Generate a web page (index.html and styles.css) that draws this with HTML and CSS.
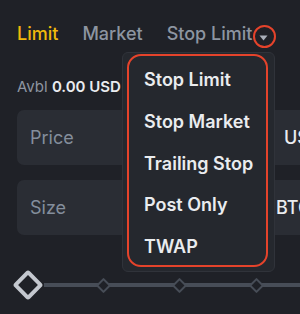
FILE: index.html
```html
<!DOCTYPE html>
<html>
<head>
<meta charset="utf-8">
<link rel="stylesheet" href="styles.css">
</head>
<body>
<div class="panel">
  <div class="tabs">
    <span class="tab active">Limit</span>
    <span class="tab">Market</span>
    <span class="tab">Stop Limit</span>
    <span class="caret-ring"><svg class="caret" width="9" height="6" viewBox="0 0 9 6"><path d="M0.5 0.5 H8.5 L4.5 5.5 Z" fill="#aab0ba"/></svg></span>
  </div>
  <div class="avbl"><span class="avbl-label">Avbl</span> <span class="avbl-value">0.00 USD</span></div>
  <div class="field"><span class="field-label">Price</span><span class="field-unit">USD</span></div>
  <div class="field field-size"><span class="field-label">Size</span><span class="field-unit">BTC</span></div>
  <div class="slider">
    <span class="knob"></span>
    <span class="track"></span>
    <span class="tick t1"></span>
    <span class="tick t2"></span>
    <span class="tick t3"></span>
  </div>
  <div class="menu">
    <ul class="menu-box">
      <li>Stop Limit</li>
      <li>Stop Market</li>
      <li>Trailing Stop</li>
      <li>Post Only</li>
      <li>TWAP</li>
    </ul>
  </div>
</div>
</body>
</html>
```
FILE: styles.css
```css
html, body {
  margin: 0;
  padding: 0;
  background: #1f2127;
  width: 300px;
  height: 314px;
  overflow: hidden;
  font-family: Inter, "Noto Sans", sans-serif;
}
.panel {
  position: relative;
  width: 300px;
  height: 314px;
  padding-left: 17px;
  box-sizing: border-box;
  overflow: hidden;
}
.tabs {
  display: flex;
  align-items: center;
  height: 34px;
  padding-top: 17px;
  font-size: 18px;
  font-weight: 500;
  color: #8d95a1;
}
.tab { margin-right: 24px; line-height: 34px; }
.tab:nth-child(3) { margin-right: 1px; }
.tab.active { color: #f0b90b; }
.caret-ring {
  width: 19px;
  height: 19px;
  border: 2px solid #e5432b;
  border-radius: 50%;
  display: flex;
  align-items: center;
  justify-content: center;
  margin-top: 4px;
}
.caret { margin-top: 3px; margin-left: -2px; }
.avbl {
  margin-top: 26px;
  height: 20px;
  line-height: 20px;
  font-size: 15px;
}
.avbl-label { color: #8d95a1; }
.avbl-value { color: #eaecef; font-weight: 600; }
.field {
  margin-top: 13px;
  height: 55px;
  width: 330px;
  border-radius: 7px;
  background: #2a2d34;
  display: flex;
  align-items: center;
  font-size: 18px;
  padding-left: 13px;
  box-sizing: border-box;
}
.field-size { margin-top: 15px; }
.field-label { color: #848e9c; width: 254px; }
.field-size .field-label { width: 246px; }
.field-unit { color: #eaecef; font-weight: 500; }
.slider {
  position: relative;
  height: 28px;
  margin-top: 36px;
  display: flex;
  align-items: center;
}
.track {
  flex: 1;
  height: 4px;
  background: #474d57;
  margin-left: 5px;
}
.knob {
  width: 14px;
  height: 14px;
  border: 4px solid #c4c8cf;
  border-radius: 3px;
  background: #1f2127;
  transform: rotate(45deg);
  margin-left: 0;
  position: relative;
  z-index: 1;
}
.tick {
  position: absolute;
  top: 9px;
  width: 7px;
  height: 7px;
  border: 2px solid #474d57;
  border-radius: 1px;
  background: #1f2127;
  transform: rotate(45deg);
}
.t1 { left: 81px; }
.t2 { left: 157px; }
.t3 { left: 234px; }
.menu {
  position: absolute;
  left: 122px;
  top: 52px;
  width: 153px;
  height: 220px;
  box-sizing: border-box;
  background: #25282e;
  border: 1px solid #30333a;
  border-radius: 6px;
  z-index: 2;
}
.menu-box {
  list-style: none;
  margin: 1px 0 0 4px;
  padding: 3px 0 0 15px;
  width: 141px;
  height: 213px;
  box-sizing: border-box;
  border: 2.5px solid #e5432b;
  border-radius: 14px;
}
.menu-box li {
  height: 41.75px;
  line-height: 41.75px;
  font-size: 18px;
  font-weight: 600;
  color: #eaecef;
  white-space: nowrap;
}
```
